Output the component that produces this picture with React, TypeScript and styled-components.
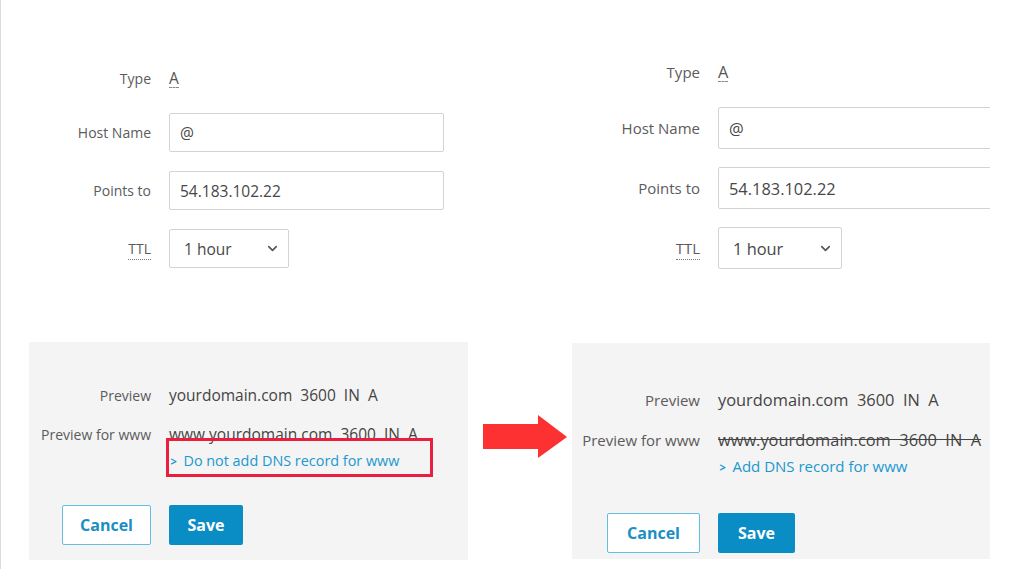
import styled, { createGlobalStyle } from 'styled-components'
import { ChevronDown } from 'lucide-react'

type Dims = {
  labelW: number
  gap: number
  labelFs: number
  valueFs: number
  linkFs: number
  fieldW: number
  fieldH: number
  ttlW: number
  padTop: number
  typeGap: number
  rowGap: number
  panelTop: number
  panelW: number
  panelLeft: number
  panelLabelW: number
  prevTop: number
  prevGap: number
  linkGap: number
  btnGap: number
  panelBottom: number
  cancelW: number
  saveW: number
}

const LEFT: Dims = {
  labelW: 150, gap: 18, labelFs: 14, valueFs: 15.5, linkFs: 14.4, fieldW: 275, fieldH: 39, ttlW: 120,
  padTop: 68, typeGap: 25, rowGap: 19, panelTop: 74, panelW: 439, panelLeft: 28,
  panelLabelW: 122, prevTop: 42, prevGap: 19, linkGap: 6, btnGap: 36, panelBottom: 15,
  cancelW: 89, saveW: 74,
}

const RIGHT: Dims = {
  labelW: 128, gap: 18, labelFs: 15, valueFs: 16.4, linkFs: 15, fieldW: 320, fieldH: 42, ttlW: 124,
  padTop: 62, typeGap: 25, rowGap: 18, panelTop: 74, panelW: 418, panelLeft: 0,
  panelLabelW: 128, prevTop: 45, prevGap: 20, linkGap: 7, btnGap: 38, panelBottom: 6,
  cancelW: 93, saveW: 77,
}

const GlobalStyle = createGlobalStyle`
  html, body {
    margin: 0;
    padding: 0;
    background: #fff;
  }
  body {
    font-family: "Open Sans", "Noto Sans", sans-serif;
    color: #444;
  }
`

function Side({ d, strike, linkText, boxed }: { d: Dims; strike?: boolean; linkText: string; boxed?: boolean }) {
  return (
    <>
      <Form $d={d}>
        <TypeRow $d={d}>
          <Label $d={d}>Type</Label>
          <TypeValue $d={d}>A</TypeValue>
        </TypeRow>
        <Row $d={d}>
          <Label $d={d}>Host Name</Label>
          <Field $d={d}>@</Field>
        </Row>
        <Row $d={d}>
          <Label $d={d}>Points to</Label>
          <Field $d={d}>54.183.102.22</Field>
        </Row>
        <Row $d={d}>
          <Label $d={d}><Dotted>TTL</Dotted></Label>
          <Select $d={d}>
            1 hour
            <ChevronDown size={15} strokeWidth={2.6} color="#555" />
          </Select>
        </Row>
      </Form>
      <PreviewPanel $d={d}>
        <PreviewRow $d={d}>
          <PanelLabel $d={d}>Preview</PanelLabel>
          <PreviewValue $d={d}>yourdomain.com  3600  IN  A</PreviewValue>
        </PreviewRow>
        <PreviewRow $d={d} style={{ marginTop: d.prevGap }}>
          <PanelLabel $d={d}>Preview for www</PanelLabel>
          <PreviewValue $d={d} $strike={strike}>www.yourdomain.com  3600  IN  A</PreviewValue>
        </PreviewRow>
        <PreviewRow $d={d} style={{ marginTop: d.linkGap }}>
          <span />
          <LinkWrap>
            <DnsLink $d={d}>
              <Caret>&gt;</Caret>{linkText}
            </DnsLink>
            {boxed && <Highlight />}
          </LinkWrap>
        </PreviewRow>
        <ButtonRow $d={d}>
          <CancelButton $w={d.cancelW}>Cancel</CancelButton>
          <SaveButton $w={d.saveW}>Save</SaveButton>
        </ButtonRow>
      </PreviewPanel>
    </>
  )
}

function App() {
  return (
    <>
      <GlobalStyle />
      <Page>
        <LeftColumn>
          <Side d={LEFT} linkText="Do not add DNS record for www" boxed />
        </LeftColumn>
        <ArrowColumn>
          <svg width="84" height="43" viewBox="0 0 84 43">
            <rect x="0" y="9" width="56" height="25" fill="#fd3131" />
            <polygon points="55,0 84,22 55,43" fill="#fd3131" />
          </svg>
        </ArrowColumn>
        <RightColumn>
          <Side d={RIGHT} linkText="Add DNS record for www" strike />
        </RightColumn>
      </Page>
    </>
  )
}

const Page = styled.div`
  display: flex;
  width: 1025px;
  height: 569px;
  overflow: hidden;
  background: #fff;
`
const LeftColumn = styled.div`
  width: 469px;
  height: 569px;
  border-left: 1px solid #dcdcdc;
  flex-shrink: 0;
`
const ArrowColumn = styled.div`
  width: 89px;
  padding: 415px 0 0 13px;
  flex-shrink: 0;
`
const RightColumn = styled.div`
  width: 418px;
  height: 569px;
  overflow: hidden;
  flex-shrink: 0;
`
const Form = styled.div<{ $d: Dims }>`
  display: flex;
  flex-direction: column;
  gap: ${p => p.$d.rowGap}px;
  padding-top: ${p => p.$d.padTop}px;
`
const Row = styled.div<{ $d: Dims }>`
  display: grid;
  grid-template-columns: ${p => p.$d.labelW}px max-content;
  column-gap: ${p => p.$d.gap}px;
  align-items: center;
  height: ${p => p.$d.fieldH}px;
`
const TypeRow = styled(Row)`
  height: 20px;
  margin-bottom: ${p => p.$d.typeGap - p.$d.rowGap}px;
`
const Label = styled.div<{ $d: Dims }>`
  text-align: right;
  font-size: ${p => p.$d.labelFs}px;
  color: #5b5b5b;
  white-space: nowrap;
`
const Dotted = styled.span`
  border-bottom: 1px dotted #777;
  padding-bottom: 1px;
`
const TypeValue = styled.span<{ $d: Dims }>`
  font-size: ${p => p.$d.valueFs}px;
  color: #555;
  justify-self: start;
  border-bottom: 1px dashed #888;
  line-height: 18px;
`
const Field = styled.div<{ $d: Dims }>`
  box-sizing: border-box;
  width: ${p => p.$d.fieldW}px;
  height: ${p => p.$d.fieldH}px;
  border: 1.5px solid #d3d3d3;
  border-radius: 2px;
  background: #fff;
  padding: 0 10px;
  display: flex;
  align-items: center;
  font-size: ${p => p.$d.valueFs}px;
  color: #474747;
`
const Select = styled(Field)`
  width: ${p => p.$d.ttlW}px;
  padding: 0 8px 0 14px;
  justify-content: space-between;
`
const PreviewPanel = styled.div<{ $d: Dims }>`
  box-sizing: border-box;
  width: ${p => p.$d.panelW}px;
  margin: ${p => p.$d.panelTop}px 0 0 ${p => p.$d.panelLeft}px;
  padding: ${p => p.$d.prevTop}px 0 ${p => p.$d.panelBottom}px;
  background: #f4f4f4;
`
const PreviewRow = styled.div<{ $d: Dims }>`
  display: grid;
  grid-template-columns: ${p => p.$d.panelLabelW}px max-content;
  column-gap: ${p => p.$d.gap}px;
  align-items: center;
  height: 20px;
`
const PanelLabel = styled(Label)``
const PreviewValue = styled.span<{ $d: Dims; $strike?: boolean }>`
  font-size: ${p => p.$d.valueFs}px;
  color: #444;
  white-space: pre;
  text-decoration: ${p => (p.$strike ? 'line-through' : 'none')};
`
const LinkWrap = styled.div`
  position: relative;
`
const DnsLink = styled.a<{ $d: Dims }>`
  font-size: ${p => p.$d.linkFs}px;
  color: #1b98cf;
  white-space: nowrap;
  cursor: pointer;
`
const Caret = styled.span`
  display: inline-block;
  font-size: 13px;
  font-weight: 700;
  margin: 0 6px 0 1px;
  transform: scaleX(0.85);
`
const Highlight = styled.div`
  position: absolute;
  left: -3px;
  top: -11px;
  width: 267px;
  height: 39px;
  box-sizing: border-box;
  border: 3px solid #ea1f40;
`
const ButtonRow = styled.div<{ $d: Dims }>`
  display: grid;
  grid-template-columns: ${p => p.$d.panelLabelW}px max-content;
  column-gap: ${p => p.$d.gap}px;
  margin-top: ${p => p.$d.btnGap}px;
`
const CancelButton = styled.button<{ $w: number }>`
  justify-self: end;
  width: ${p => p.$w}px;
  height: 40px;
  box-sizing: border-box;
  border: 1.5px solid #63bfe2;
  border-radius: 2px;
  background: #fff;
  color: #1a8fc3;
  font-family: "Open Sans", sans-serif;
  font-size: 16px;
  font-weight: 700;
`
const SaveButton = styled.button<{ $w: number }>`
  width: ${p => p.$w}px;
  height: 40px;
  border: none;
  border-radius: 2px;
  background: #0a8dc5;
  color: #fff;
  font-family: "Open Sans", sans-serif;
  font-size: 16px;
  font-weight: 700;
`

export default App
